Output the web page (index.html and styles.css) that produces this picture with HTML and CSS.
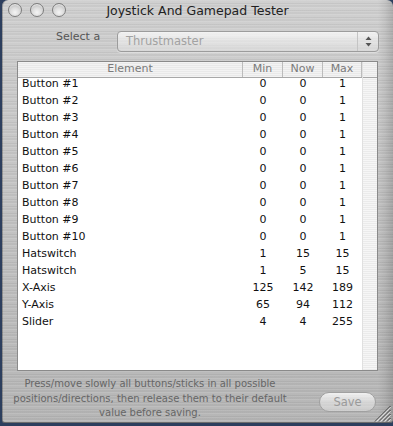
FILE: index.html
```html
<!DOCTYPE html>
<html>
<head>
<meta charset="utf-8">
<link rel="stylesheet" href="styles.css">
</head>
<body>
<div class="window">
  <div class="titlebar">
    <div class="lights">
      <span class="light"></span><span class="light"></span><span class="light"></span>
    </div>
    <div class="title">Joystick And Gamepad Tester</div>
    <div></div>
  </div>
  <div class="select-row">
    <span class="label">Select a</span>
    <div class="popup">
      <span class="popup-text">Thrustmaster</span>
      <span class="popup-arrows">
        <svg width="7" height="11" viewBox="0 0 7 11"><path d="M3.5 0.5 L6.5 4 L0.5 4 Z" fill="#555"/><path d="M3.5 10.5 L6.5 7 L0.5 7 Z" fill="#555"/></svg>
      </span>
    </div>
  </div>
  <div class="table">
    <div class="list">
      <div class="row head">
        <div class="c-el">Element</div><div class="c-n">Min</div><div class="c-n">Now</div><div class="c-n last">Max</div>
      </div>
      <div class="row"><div class="c-el">Button #1</div><div class="c-n">0</div><div class="c-n">0</div><div class="c-n">1</div></div>
      <div class="row"><div class="c-el">Button #2</div><div class="c-n">0</div><div class="c-n">0</div><div class="c-n">1</div></div>
      <div class="row"><div class="c-el">Button #3</div><div class="c-n">0</div><div class="c-n">0</div><div class="c-n">1</div></div>
      <div class="row"><div class="c-el">Button #4</div><div class="c-n">0</div><div class="c-n">0</div><div class="c-n">1</div></div>
      <div class="row"><div class="c-el">Button #5</div><div class="c-n">0</div><div class="c-n">0</div><div class="c-n">1</div></div>
      <div class="row"><div class="c-el">Button #6</div><div class="c-n">0</div><div class="c-n">0</div><div class="c-n">1</div></div>
      <div class="row"><div class="c-el">Button #7</div><div class="c-n">0</div><div class="c-n">0</div><div class="c-n">1</div></div>
      <div class="row"><div class="c-el">Button #8</div><div class="c-n">0</div><div class="c-n">0</div><div class="c-n">1</div></div>
      <div class="row"><div class="c-el">Button #9</div><div class="c-n">0</div><div class="c-n">0</div><div class="c-n">1</div></div>
      <div class="row"><div class="c-el">Button #10</div><div class="c-n">0</div><div class="c-n">0</div><div class="c-n">1</div></div>
      <div class="row"><div class="c-el">Hatswitch</div><div class="c-n">1</div><div class="c-n">15</div><div class="c-n">15</div></div>
      <div class="row"><div class="c-el">Hatswitch</div><div class="c-n">1</div><div class="c-n">5</div><div class="c-n">15</div></div>
      <div class="row"><div class="c-el">X-Axis</div><div class="c-n">125</div><div class="c-n">142</div><div class="c-n">189</div></div>
      <div class="row"><div class="c-el">Y-Axis</div><div class="c-n">65</div><div class="c-n">94</div><div class="c-n">112</div></div>
      <div class="row"><div class="c-el">Slider</div><div class="c-n">4</div><div class="c-n">4</div><div class="c-n">255</div></div>
    </div>
    <div class="scroller">
      <div class="scroller-head"></div>
    </div>
  </div>
  <div class="footer">
    <p class="hint">Press/move slowly all buttons/sticks in all possible<br>positions/directions, then release them to their default<br>value before saving.</p>
    <button class="save">Save</button>
  </div>
  <svg class="grip" width="18" height="18" viewBox="0 0 18 18">
    <g stroke="#333" stroke-width="1">
      <line x1="17.5" y1="2" x2="2" y2="17.5"/>
      <line x1="17.5" y1="6" x2="6" y2="17.5"/>
      <line x1="17.5" y1="10" x2="10" y2="17.5"/>
      <line x1="17.5" y1="14" x2="14" y2="17.5"/>
    </g>
    <g stroke="#fff" stroke-width="1" opacity="0.8">
      <line x1="17.5" y1="3.2" x2="3.2" y2="17.5"/>
      <line x1="17.5" y1="7.2" x2="7.2" y2="17.5"/>
      <line x1="17.5" y1="11.2" x2="11.2" y2="17.5"/>
      <line x1="17.5" y1="15.2" x2="15.2" y2="17.5"/>
    </g>
  </svg>
</div>
</body>
</html>
```

FILE: styles.css
```css
html, body {
  margin: 0;
  padding: 0;
}
body {
  width: 393px;
  height: 426px;
  overflow: hidden;
  background: #2d3f5e;
  font-family: "DejaVu Sans", sans-serif;
}
.window {
  position: relative;
  margin-left: 2px;
  width: 391px;
  height: 423px;
  border-radius: 6px 6px 3px 3px;
  overflow: hidden;
  background:
    linear-gradient(90deg, rgba(0,0,0,0) 0, rgba(0,0,0,0) 376px, rgba(0,0,0,0.06) 383px, rgba(0,0,0,0.16) 391px),
    repeating-linear-gradient(180deg, rgba(255,255,255,0.10) 0 1px, rgba(0,0,0,0) 1px 3px, rgba(0,0,0,0.05) 3px 4px, rgba(255,255,255,0.05) 4px 5px, rgba(0,0,0,0.03) 5px 7px),
    linear-gradient(180deg, #d0d0d0 0%, #c4c4c4 45%, #b6b6b6 100%);
  box-shadow: inset 1px 0 0 rgba(0,0,0,0.25), inset 0 -1px 0 rgba(0,0,0,0.4);
}
.titlebar {
  display: grid;
  grid-template-columns: 1fr auto 1fr;
  height: 22px;
  align-items: start;
}
.lights {
  display: flex;
  gap: 8px;
  padding: 3px 0 0 6px;
}
.light {
  width: 14px;
  height: 14px;
  border-radius: 50%;
  box-sizing: border-box;
  border: 1px solid #7c7c7c;
  background: radial-gradient(circle at 50% 70%, #f4f4f4 0%, #dcdcdc 45%, #a8a8a8 100%);
  box-shadow: inset 0 1px 1px rgba(255,255,255,0.7);
}
.title {
  font-size: 12.5px;
  line-height: 22px;
  color: #222;
  white-space: nowrap;
}
.select-row {
  display: flex;
  align-items: flex-start;
  margin-top: 9px;
  padding-left: 54px;
}
.label {
  width: 61px;
  font-size: 11px;
  line-height: 12px;
  color: #555;
}
.popup {
  width: 262px;
  height: 21px;
  box-sizing: border-box;
  border: 1px solid #9c9c9c;
  border-radius: 4px;
  background: linear-gradient(180deg, rgba(255,255,255,0.75), rgba(240,240,240,0.6) 50%, rgba(225,225,225,0.55));
  display: flex;
  box-shadow: 0 1px 1px rgba(255,255,255,0.5);
}
.popup-text {
  flex: 1;
  padding-left: 8px;
  font-size: 11.5px;
  line-height: 19px;
  color: #a2a2a2;
}
.popup-arrows {
  width: 20px;
  border-left: 1px solid #c4c4c4;
  display: flex;
  align-items: center;
  justify-content: center;
}
.table {
  display: flex;
  margin: 9px 0 0 15px;
  width: 361px;
  height: 310px;
  box-sizing: border-box;
  border: 1px solid #8a8a8a;
  background: #fff;
}
.list {
  width: 344px;
}
.row {
  display: grid;
  grid-template-columns: 225px 40px 40px 39px;
  height: 17px;
  line-height: 12px;
  font-size: 11px;
  color: #111;
}
.row.head {
  height: 16px;
  line-height: 14px;
  box-sizing: border-box;
  border-bottom: 1px solid #a8a8a8;
  color: #7a7a7a;
  background: repeating-linear-gradient(180deg, #f3f3f3 0 1px, #e9e9e9 1px 2px);
}
.c-el {
  padding-left: 4px;
}
.c-n {
  text-align: center;
}
.row.head .c-el {
  text-align: center;
  padding-left: 0;
}
.row.head .c-el,
.row.head .c-n {
  border-right: 1px solid #bcbcbc;
}
.scroller {
  width: 15px;
  background: repeating-linear-gradient(180deg, #f6f6f6 0 1px, #ebebeb 1px 2px);
  border-left: 1px solid #e0e0e0;
  box-sizing: border-box;
}
.scroller-head {
  height: 16px;
  box-sizing: border-box;
  border-bottom: 1px solid #a8a8a8;
  background: repeating-linear-gradient(180deg, #f3f3f3 0 1px, #e9e9e9 1px 2px);
}
.footer {
  display: flex;
  align-items: flex-start;
}
.hint {
  margin: 6px 0 0 0;
  width: 296px;
  font-size: 10px;
  line-height: 14.5px;
  color: #666;
  text-align: center;
}
.save {
  margin: 21px 0 0 21px;
  width: 57px;
  height: 20px;
  padding: 0;
  border: 1px solid #a0a0a0;
  border-radius: 10px;
  background: linear-gradient(180deg, rgba(255,255,255,0.8), rgba(235,235,235,0.6) 50%, rgba(220,220,220,0.6));
  font-family: "DejaVu Sans", sans-serif;
  font-size: 11.5px;
  line-height: 18px;
  color: #9a9a9a;
}
.grip {
  position: absolute;
  right: 2px;
  bottom: 1px;
}
```
